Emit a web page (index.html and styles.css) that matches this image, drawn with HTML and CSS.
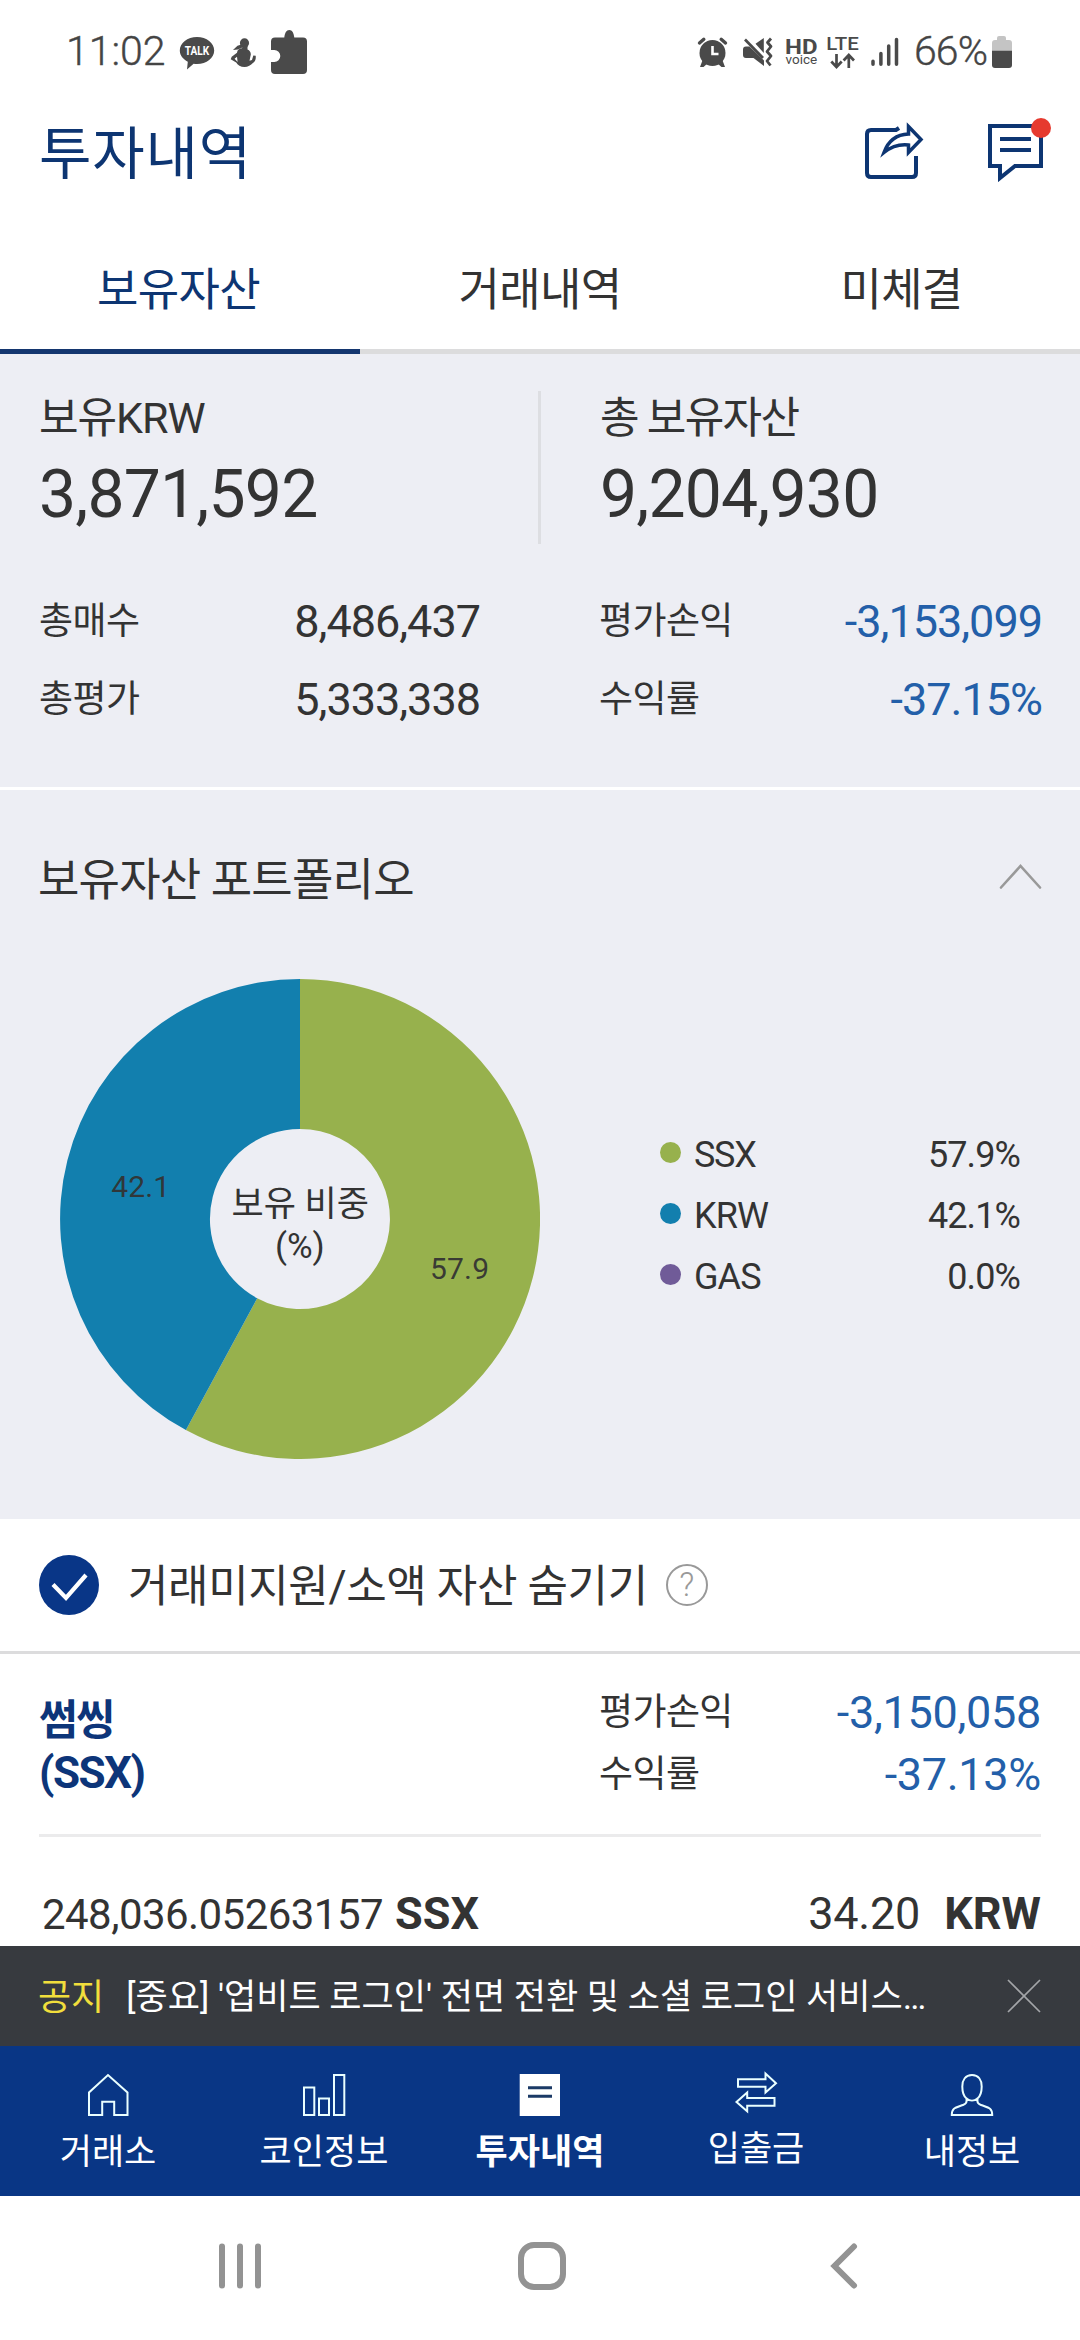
FILE: index.html
```
<!DOCTYPE html>
<html lang="ko">
<head>
<meta charset="utf-8">
<meta name="viewport" content="width=device-width">
<title>투자내역</title>
<link rel="stylesheet" href="styles.css">
</head>
<body>
<div class="screen">

  <div class="status">
    <span class="status-time">11:02</span>
    <svg class="status-left" width="134" height="50" viewBox="176 28 134 50">
      <path fill="#4a4a4a" d="M197 37c9.600 0 17.200 6 17.200 13.500S206.600 64 197 64c-1.200 0-2.300-.1-3.400-.3L187 69.500l.8-7.800c-4.800-2.400-8-6.500-8-11.200C179.800 43 187.400 37 197 37z"/>
      <text class="talk" x="184.700" y="55.200" textLength="24.500" lengthAdjust="spacingAndGlyphs">TALK</text>
      <g fill="#4a4a4a">
        <circle cx="244.500" cy="42.900" r="4.600"/>
        <path d="M241.500 44.500l-4 1.200-4.500 4.200 4.800-.3 4.500-2z"/>
        <path fill-rule="evenodd" d="M242.500 46h5v3.500c2.300 1 3.400 2.800 3.300 5l-1.300 6.300 2.500-.8 1.300-4.500 2.400.3c.4 3.500-.6 6-2.800 7.300-2 2.300-5 4-8.400 4-3.800 0-7-2-8.300-4.500l-5.500-3.300 1-2.500 5.300-4c.3-3 2.200-4.300 5-4.500zM234.600 58.700l3 3.200-.6-5.200z"/>
      </g>
      <path fill="#4a4a4a" d="M275 37.500h9.300c.5-4.500 2-7.500 5-7.500s4.500 3 5 7.500h8.700a4 4 0 0 1 4 4V70a4 4 0 0 1-4 4h-28a4 4 0 0 1-4-4v-8h3.300a6 6 0 0 0 6-6 6 6 0 0 0-6-6H271v-8.500a4 4 0 0 1 4-4z"/>
    </svg>
    <svg class="status-right" width="208" height="50" viewBox="694 28 208 50">
      <g fill="#4a4a4a">
        <circle cx="712.500" cy="53" r="13"/>
        <path d="M703 59l5 4-4.500 4h-3.500zM722 59l-5 4 4.500 4h3.500z"/>
      </g>
      <g fill="none" stroke="#4a4a4a" stroke-width="3.400" stroke-linecap="round">
        <path d="M699.500 43l4.300-3.700M725.500 43l-4.300-3.700"/>
      </g>
      <path fill="none" stroke="#fff" stroke-width="2.600" d="M712.500 46v8h6"/>
      <g fill="#4a4a4a">
        <path d="M755.500 43.800l8.300-5.800v15zM743 49.500q0-3 3-3h3.500L764 60.500V66L753.500 58H746q-3 0-3-3z"/>
      </g>
      <path fill="none" stroke="#4a4a4a" stroke-width="2.700" d="M745 39.500l18 18.500"/>
      <path fill="none" stroke="#4a4a4a" stroke-width="2.800" stroke-linejoin="round" d="M771 38.500l-3.500 4 3.500 4-4 5 4 4.500-4 5 3.500 4.500"/>
      <text class="s-hd" x="785" y="53.700" textLength="32.500" lengthAdjust="spacingAndGlyphs">HD</text>
      <text class="s-voice" x="785.500" y="64.300" textLength="31.700">voice</text>
      <text class="s-lte" x="826.300" y="50.300" textLength="32.500" lengthAdjust="spacingAndGlyphs">LTE</text>
      <g fill="none" stroke="#4a4a4a" stroke-width="2.700">
        <path d="M836.500 54v13M831.300 61.500l5.200 5.500 5.200-5.500M848.800 68V55M843.600 60.500l5.200-5.500 5.200 5.500"/>
      </g>
      <g stroke="#4a4a4a" stroke-width="3.500" stroke-linecap="round">
        <path d="M873 61.200v3M880.900 53.500v10.700M888.700 46v18.200M896.500 39.500v24.700"/>
      </g>
    </svg>
    <span class="status-batt">66%</span>
    <svg class="batt" width="20" height="50" viewBox="992 28 20 50">
      <path fill="#c4c4c4" d="M997 40v-2q0-2 2-2h5q2 0 2 2v2h3q3 0 3 3v8h-20v-8q0-3 3-3z"/>
      <path fill="#4a4a4a" d="M992 50.700h20V65q0 3-3 3h-14q-3 0-3-3z"/>
    </svg>
  </div>

  <header class="header">
    <h1 class="title">투자내역</h1>
    <svg class="share" width="70" height="70" viewBox="860 120 70 70" fill="none" stroke="#0d3572" stroke-width="4">
      <path d="M899 128l-3 2H871q-4 0-4 4v39q0 4 4 4h41q4 0 4-4v-17"/>
      <path stroke-width="3.500" d="M908.500 126.500l12.500 13-12.500 13v-7.500c-9-1-16.500 1-24.500 7.500 4-11 12-18 24.500-18.500z"/>
    </svg>
    <svg class="message" width="70" height="70" viewBox="984 112 70 70">
      <path fill="none" stroke="#0d3572" stroke-width="4" d="M990 126h51v40h-26l-15 12v-12h-10z"/>
      <path fill="none" stroke="#0d3572" stroke-width="4" d="M1000 139h31M1000 150h31"/>
      <circle cx="1041" cy="128" r="10" fill="#e63a2f"/>
    </svg>
  </header>

  <nav class="tabs">
    <div class="tab active">보유자산</div>
    <div class="tab">거래내역</div>
    <div class="tab">미체결</div>
  </nav>

  <section class="summary">
    <div class="totals">
      <div class="total first">
        <div class="total-label">보유KRW</div>
        <div class="total-value">3,871,592</div>
      </div>
      <div class="total">
        <div class="total-label tight">총 보유자산</div>
        <div class="total-value">9,204,930</div>
      </div>
    </div>
    <div class="figures">
      <div class="figure"><span class="label">총매수</span><span class="num">8,486,437</span></div>
      <div class="figure"><span class="label">평가손익</span><span class="num down">-3,153,099</span></div>
      <div class="figure"><span class="label">총평가</span><span class="num">5,333,338</span></div>
      <div class="figure"><span class="label">수익률</span><span class="num down">-37.15%</span></div>
    </div>
  </section>

  <section class="portfolio">
    <div class="portfolio-head">
      <h2 class="portfolio-title">보유자산 포트폴리오</h2>
      <svg class="chevron" width="44" height="30" viewBox="0 0 44 30" fill="none" stroke="#999" stroke-width="2.600" stroke-linecap="round"><path d="M3 25.500L22.500 4 42 25.500"/></svg>
    </div>
    <div class="portfolio-body">
      <svg class="donut" width="480" height="480" viewBox="60 979 480 480">
        <path fill="#97b14d" d="M300 979A240 240 0 1 1 185.900 1430.100L257.200 1298.200A90 90 0 1 0 300 1129z"/>
        <path fill="#127fae" d="M300 979A240 240 0 0 0 185.900 1430.100L257.200 1298.200A90 90 0 0 1 300 1129z"/>
        <text class="slice" x="111.200" y="1197" textLength="59">42.1</text>
        <text class="slice" x="430" y="1279" textLength="59">57.9</text>
        <text class="center" x="231.500" y="1216">보유 비중</text>
        <text class="center" x="275" y="1258">(%)</text>
      </svg>
      <ul class="legend">
        <li><i class="dot green"></i><span class="ssx">SSX</span><b>57.9%</b></li>
        <li><i class="dot blue"></i><span>KRW</span><b>42.1%</b></li>
        <li><i class="dot purple"></i><span>GAS</span><b>0.0%</b></li>
      </ul>
    </div>
  </section>

  <div class="filter">
    <svg class="check" width="60" height="60" viewBox="0 0 60 60"><circle cx="30" cy="30" r="30" fill="#093687"/><path fill="none" stroke="#fff" stroke-width="4.200" d="M14 29.500l13 13.500 20-23"/></svg>
    <span class="filter-text">거래미지원/소액 자산 숨기기</span>
    <span class="help">?</span>
  </div>

  <section class="asset">
    <div class="asset-name"><span>썸씽</span><span class="ticker">(SSX)</span></div>
    <div class="asset-stats">
      <div class="stat"><span class="label">평가손익</span><span class="num down">-3,150,058</span></div>
      <div class="stat"><span class="label">수익률</span><span class="num down">-37.13%</span></div>
    </div>
  </section>

  <div class="holding">
    <div class="amount"><span class="qty">248,036.05263157</span><b>SSX</b></div>
    <div class="price"><span>34.20</span><b>KRW</b></div>
  </div>

  <div class="notice">
    <span class="notice-tag">공지</span>
    <span class="notice-text">[중요] '업비트 로그인' 전면 전환 및 소셜 로그인 서비스…</span>
    <svg class="close" width="34" height="34" viewBox="0 0 34 34" stroke="#a3a5a8" stroke-width="1.700"><path d="M1 1l32 32M33 1L1 33"/></svg>
  </div>

  <nav class="bottom">
    <div class="item">
      <svg width="50" height="50" viewBox="83 2071 50 50"><path d="M89 2115v-22.500l19-17.500 19.500 17.500V2115h-13.300v-13.300h-12V2115z"/></svg>
      <span>거래소</span>
    </div>
    <div class="item">
      <svg width="50" height="50" viewBox="299 2071 50 50"><path d="M304 2087.500h10.300V2115H304zM319 2098.500h10V2115h-10zM334 2075h10.300v40H334z"/></svg>
      <span>코인정보</span>
    </div>
    <div class="item current">
      <svg width="50" height="50" viewBox="515 2071 50 50"><path class="solid" d="M519.700 2074H560v42h-40.300z"/><path class="rule" d="M528 2087.700h24M528 2096.300h24"/></svg>
      <span>투자내역</span>
    </div>
    <div class="item transfer">
      <svg width="50" height="50" viewBox="731 2071 50 50"><path d="M738 2079.300h27.500v-5.800l10.500 9.700-10.500 9.300v-5.800H738zM774.500 2098h-27.300v-5.500L736.500 2102l10.700 9.200v-5.500h27.300z"/></svg>
      <span>입출금</span>
    </div>
    <div class="item">
      <svg width="50" height="50" viewBox="947 2071 50 50"><path d="M972 2075c-6.500 0-9.700 5-9.700 11.500 0 5.500 1.500 9.800 4.200 12 .5 4.500-.8 5.500-3.500 6.500-8.500 3-11.200 3.200-11.200 10h40.400c0-6.800-2.700-7-11.200-10-2.700-1-4-2-3.500-6.500 2.700-2.200 4.200-6.500 4.200-12 0-6.500-3.200-11.500-9.700-11.500zM966.500 2098.500c3.300 2.700 7.700 2.700 11 0"/></svg>
      <span>내정보</span>
    </div>
  </nav>

  <div class="system">
    <svg width="50" height="50" viewBox="0 0 50 50"><path d="M7 5.500v39M25 5.500v39M43 5.500v39"/></svg>
    <svg width="50" height="50" viewBox="0 0 50 50"><rect x="4" y="4" width="42" height="42" rx="13"/></svg>
    <svg width="50" height="50" viewBox="0 0 50 50"><path d="M35 5.500L15.500 25 35 44.500"/></svg>
  </div>

</div>
</body>
</html>
```
FILE: styles.css
```
* { box-sizing: border-box; margin: 0; padding: 0; }

body {
  width: 1080px;
  background: #fff;
  color: #333;
  font-family: Roboto, "Noto Sans CJK KR", sans-serif;
  font-weight: 400;
}

svg { display: block; flex: none; }

.screen {
  width: 1080px;
  height: 2340px;
  display: flex;
  flex-direction: column;
  overflow: hidden;
  background: #fff;
}
.screen > * { flex: none; }

/* device status bar */
.status {
  height: 100px;
  display: flex;
  align-items: flex-start;
  padding: 28px 68px 0 66px;
  color: #444;
}
.status-time, .status-batt { font-weight: 300; line-height: 46px; }
.status-time { width: 110px; font-size: 41px; -webkit-text-stroke: 0.4px #444; }
.status-right { margin-left: auto; }
.status-batt { width: 76px; margin-left: 12px; font-size: 41px; letter-spacing: -0.9px; white-space: nowrap; -webkit-text-stroke: 0.4px #444; }
.batt { margin-left: 2px; }
.talk { fill: #fff; font-weight: 700; font-size: 12.500px; }
.s-hd { fill: #4a4a4a; font-weight: 700; font-size: 20px; }
.s-voice { fill: #4a4a4a; font-size: 13.500px; }
.s-lte { fill: #4a4a4a; font-weight: 500; font-size: 19px; }

/* page header */
.header {
  height: 110px;
  display: flex;
  align-items: center;
  padding: 0 26px 0 39px;
  color: #0d3572;
}
.title { flex: 1; font-size: 57px; line-height: 110px; font-weight: 400; letter-spacing: 0.8px; }
.share { margin-right: 54px; }
.message { margin-top: -16px; }

.tabs { height: 144px; display: grid; grid-template-columns: repeat(3, 1fr); }
.tab {
  padding-top: 22px;
  border-bottom: 5px solid #dcdcdd;
  font-size: 45px;
  line-height: 117px;
  letter-spacing: -0.7px;
  text-align: center;
}
.tab.active { padding-right: 3px; color: #0d3572; border-color: #14366f; }
.tab:last-child { padding-left: 3px; }

/* balance summary */
.summary {
  height: 436px;
  padding: 37px 39px 0;
  background: #edeef4;
  border-bottom: 3px solid #fff;
}
.totals { display: flex; }
.total { flex: 1; padding-left: 59px; }
.total.first { flex: 0 0 502px; padding-left: 0; border-right: 3px solid #dddee2; }
.total-label { font-size: 43px; line-height: 54px; letter-spacing: -1px; }
.total-label.tight { letter-spacing: -1.700px; }
.total-value { font-size: 66px; line-height: 99px; letter-spacing: -0.8px; }
.figures {
  display: grid;
  grid-template-columns: 441px 443px;
  column-gap: 119px;
  margin-top: 39px;
}
.figure, .stat { display: flex; justify-content: space-between; line-height: 78px; }
.label { font-size: 37px; letter-spacing: -0.6px; }
.num { font-size: 45px; letter-spacing: -1px; }
.down { color: #235fa9; }

/* portfolio chart */
.portfolio { height: 729px; padding-top: 41px; background: #edeef4; }
.portfolio-head {
  height: 100px;
  display: flex;
  justify-content: space-between;
  align-items: center;
  padding: 0 38px 0 38px;
}
.portfolio-title { font-size: 45px; line-height: 100px; font-weight: 400; letter-spacing: -0.8px; }
.chevron { margin-top: -8px; }
.portfolio-body { display: flex; align-items: center; padding: 48px 60px 0; }
.slice { font-size: 30px; fill: #333; fill-opacity: 0.95; }
.center { font-size: 35px; fill: #333; }
.legend { width: 360px; margin: -6px 0 0 120px; list-style: none; }
.legend li {
  display: flex;
  align-items: center;
  height: 61px;
  font-size: 36px;
  line-height: 61px;
  letter-spacing: -0.9px;
}
.legend b { margin-left: auto; font-weight: 400; }
.legend .ssx { letter-spacing: -1.300px; }
.dot { width: 21px; height: 21px; margin: 0 13px 5px 0; border-radius: 50%; }
.green { background: #97b14d; }
.blue { background: #127fae; }
.purple { background: #705b98; }

/* asset filter */
.filter {
  height: 135px;
  display: flex;
  align-items: center;
  padding-left: 39px;
  border-bottom: 3px solid #dcdcdd;
}
.filter-text { margin-left: 29px; padding-top: 3px; font-size: 44px; line-height: 60px; letter-spacing: -0.4px; }
.help {
  width: 42px;
  height: 42px;
  margin-left: 18px;
  border: 2.500px solid #999;
  border-radius: 50%;
  color: #999;
  font-size: 33px;
  font-weight: 300;
  line-height: 38px;
  text-align: center;
}

/* asset rows */
.asset {
  height: 183px;
  margin: 0 39px;
  padding-top: 28px;
  display: flex;
  justify-content: space-between;
  border-bottom: 3px solid #ebebec;
}
.asset-name {
  display: flex;
  flex-direction: column;
  padding-top: 13px;
  color: #0d3579;
  font-size: 42px;
  font-weight: 700;
  line-height: 52px;
  letter-spacing: -1.500px;
}
.ticker { font-size: 44px; letter-spacing: -1.500px; }
.asset-stats { width: 442px; }
.stat { line-height: 62px; }
.stat .num { letter-spacing: -0.3px; }

.holding {
  height: 109px;
  display: flex;
  justify-content: space-between;
  padding: 46px 39px 0 42px;
  font-size: 45px;
  line-height: 62px;
}
.amount, .price { display: flex; align-items: baseline; }
.amount { gap: 12px; }
.qty { font-size: 42px; letter-spacing: -0.55px; }
.price { gap: 24px; }
.price span { letter-spacing: -0.2px; }
.holding b { font-weight: 700; }

.notice {
  height: 100px;
  display: flex;
  align-items: center;
  padding: 0 39px 0 38px;
  background: #373a3f;
  color: #fff;
  font-size: 35px;
  line-height: 50px;
}
.notice-tag { padding-top: 4px; color: #f1de3c; font-size: 36px; }
.notice-text { margin-left: 22px; padding-top: 4px; white-space: nowrap; }
.close { margin-left: auto; }

/* bottom navigation */
.bottom {
  height: 150px;
  display: grid;
  grid-template-columns: repeat(5, 1fr);
  background: #093685;
  color: #fff;
}
.item { display: flex; flex-direction: column; align-items: center; padding-top: 25px; }
.item path { fill: none; stroke: #eaffff; stroke-width: 2; }
.item .solid { fill: #fff; stroke: none; }
.item .rule { stroke: #1b3a66; stroke-width: 3; }
.item span { margin-top: 9px; font-size: 35px; line-height: 45px; }
.current span { font-weight: 700; }
.transfer span { margin-top: 6px; }

.system {
  height: 144px;
  display: flex;
  align-items: center;
  justify-content: space-between;
  padding: 0 211px 4px 215px;
}
.system svg { fill: none; stroke: #939393; stroke-width: 6; stroke-linecap: round; }
```
